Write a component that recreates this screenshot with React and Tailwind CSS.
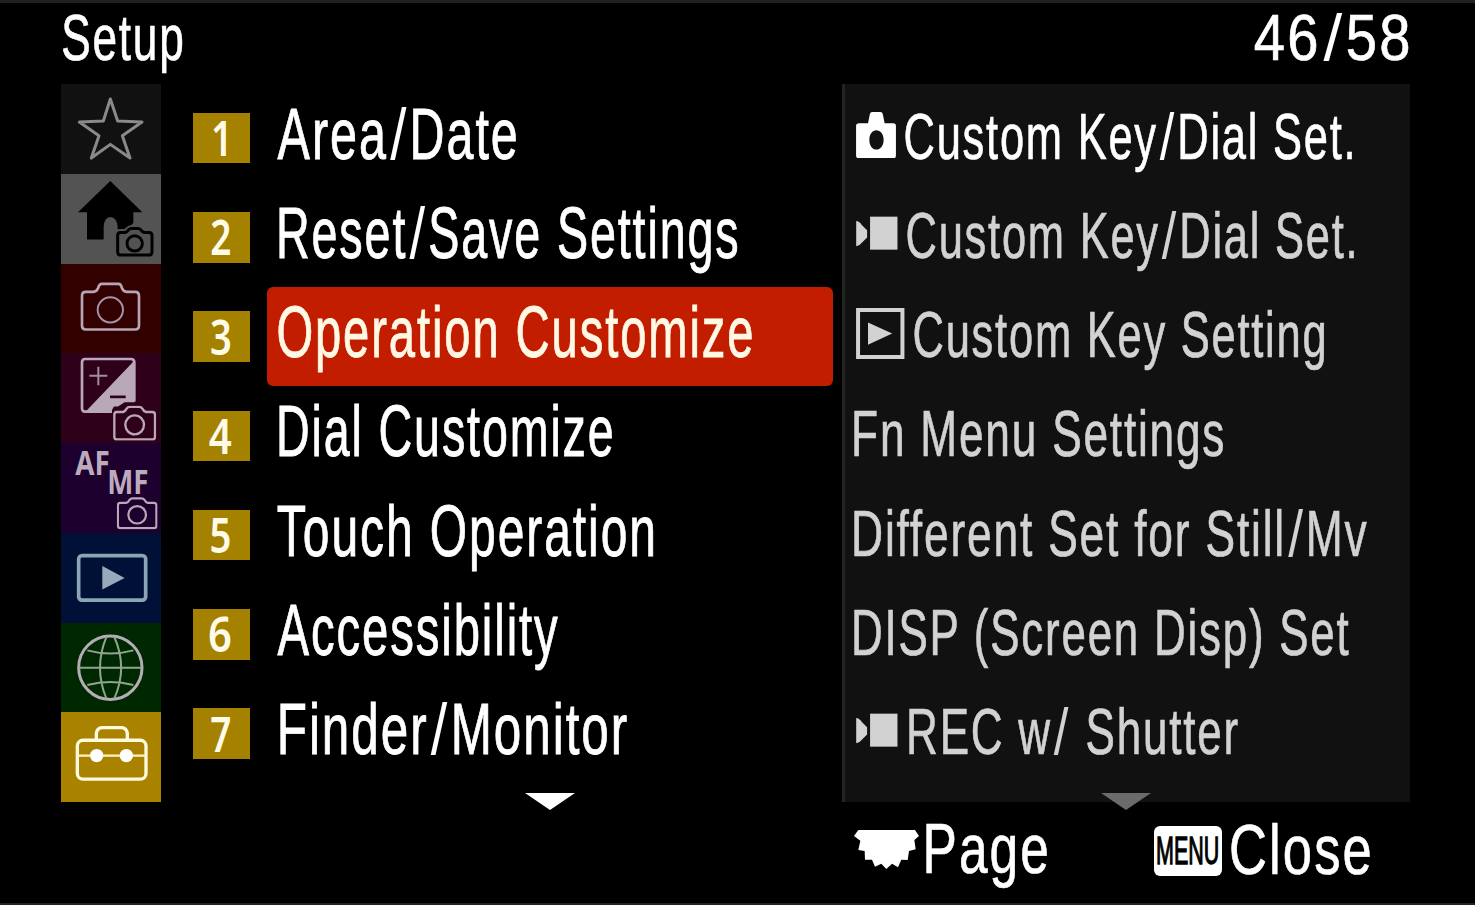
import { Fragment, useLayoutEffect, useRef } from 'react';

// Condensed lettering: the text is scaled horizontally so its ink spans exactly `w` pixels.
function Label({ text, w, className = '' }) {
  const ref = useRef(null);
  useLayoutEffect(() => {
    const el = ref.current;
    const cs = getComputedStyle(el);
    const ctx = document.createElement('canvas').getContext('2d');
    // Side bearings are measured at ten times the size, as glyph bounds are rounded to pixels.
    ctx.font = `${cs.fontWeight} ${parseFloat(cs.fontSize) * 10}px ${cs.fontFamily}`;
    const first = ctx.measureText(text[0]);
    const last = ctx.measureText(text[text.length - 1]);
    const left = -first.actualBoundingBoxLeft / 10;
    const right = (last.width - last.actualBoundingBoxRight) / 10;
    const spacing = parseFloat(cs.letterSpacing) || 0;
    const stroke = parseFloat(cs.webkitTextStrokeWidth) || 0;
    const ink = el.offsetWidth - spacing - left - right + stroke;
    const k = (w - 1) / ink;
    el.style.transform = `translateX(${0.3 + (stroke / 2 - left) * k}px) scaleX(${k})`;
  }, [text, w]);
  return (
    <span className={`block h-20 shrink-0 leading-[80px] whitespace-nowrap ${className}`} style={{ width: w }}>
      <span ref={ref} className="inline-block origin-left whitespace-pre">
        {text.split('/').map((part, i) => (
          <Fragment key={i}>
            {i > 0 && <span className="mr-[0.05em] ml-[0.08em] inline-block scale-x-120 [-webkit-text-stroke:0px]">/</span>}
            {part}
          </Fragment>
        ))}
      </span>
    </span>
  );
}

const sans = "font-['Liberation_Sans',Arial,sans-serif] tracking-[0.04em]";
const digit = "font-['Noto_Sans',sans-serif] font-semibold";

function MiniCamera({ x, y, w, h, className }) {
  return (
    <svg x={x} y={y} width={w} height={h} viewBox="0 0 130 104" preserveAspectRatio="none" className={className} fill="none" stroke="currentColor" strokeWidth="7">
      <path d="M11 19H30Q37 17 41 9Q44 4 51 4H78Q85 4 88 9Q92 17 99 19H118Q126 19 126 27V92Q126 100 118 100H12Q4 100 4 92V27Q4 19 11 19Z" />
      <circle cx="65" cy="57" r="28" />
    </svg>
  );
}

function Tile({ bg, box, children, overlay }) {
  return (
    <div className={`relative h-[89.75px] w-[100px] ${bg}`}>
      <svg viewBox={box} preserveAspectRatio="none" className="block h-full w-full" fill="none">{children}</svg>
      {overlay}
    </div>
  );
}

function Sidebar() {
  return (
    <nav className="ml-[61px] w-[100px] shrink-0">
      <Tile bg="bg-[#111111]" box="33 252 300 269">
        <path d="M181 297L203 363L276 366L217 407L240 474L181 433L124 474L147 407L88 366L160 363Z" stroke="#8a8a8a" strokeWidth="9" strokeLinejoin="round" />
      </Tile>
      <Tile bg="bg-[#535353]" box="33 521 300 269">
        <path d="M181 542L277 636H250V668L232 685L203 688V680Q200 650 181 650Q163 650 161 680V717H111V636H84Z" fill="#000" />
        <path d="M211 696H226Q232 694 236 688Q239 684 245 684H263Q269 684 272 688Q276 694 282 696H297Q306 696 306 705V755Q306 764 297 764H212Q203 764 203 755V705Q203 696 211 696Z" stroke="#535353" strokeWidth="20" />
        <g stroke="#000" strokeWidth="9">
          <path d="M211 696H226Q232 694 236 688Q239 684 245 684H263Q269 684 272 688Q276 694 282 696H297Q306 696 306 705V755Q306 764 297 764H212Q203 764 203 755V705Q203 696 211 696Z" fill="#535353" />
          <circle cx="254" cy="729" r="23" />
        </g>
      </Tile>
      <Tile bg="bg-[#330000]" box="33 11 300 270">
        <path d="M107 95H130Q140 94 144 84Q148 71 155 71H205Q213 71 216 84Q220 94 230 95H255Q267 95 267 107V197Q267 208 255 208H107Q96 208 96 197V107Q96 95 107 95Z" stroke="#b7a5b6" strokeWidth="8" />
        <circle cx="181" cy="149" r="38" stroke="#a493a6" strokeWidth="6" />
      </Tile>
      <Tile bg="bg-[#2f0019]" box="33 281 300 268">
        <path d="M254 303V428H224L204 441H192L182 458H105Z" fill="#b9a8b7" />
        <path d="M186 456H105Q96 456 96 446V309Q96 299 105 299H243Q253 299 253 309V426" stroke="#b9a8b7" strokeWidth="8" />
        <path d="M118 349H172M145 322V377" stroke="#a18c9f" strokeWidth="6" />
        <path d="M180 412H227" stroke="#2f0019" strokeWidth="8" />
        <MiniCamera x="189" y="438" w="130" h="105" className="text-[#b9a8b7]" />
      </Tile>
      <Tile
        bg="bg-[#1d002e]"
        box="33 549 300 269"
        overlay={
          <>
            <Label text="AF" w={34} className="absolute top-[-21px] left-[14px] font-['Noto_Sans',sans-serif] text-[34px] font-bold text-[#bcaabd]" />
            <Label text="MF" w={39} className="absolute top-[-2.5px] left-[47.5px] font-['Noto_Sans',sans-serif] text-[34px] font-bold text-[#bcaabd]" />
          </>
        }
      >
        <MiniCamera x="200" y="711" w="123" h="97" className="text-[#b9a8b7]" />
      </Tile>
      <Tile bg="bg-[#001036]" box="33 9 300 270">
        <rect x="86" y="77" width="201" height="134" rx="10" stroke="#8aa5b3" strokeWidth="11" />
        <path d="M157 108L224 144L157 179Z" fill="#98a9bb" />
      </Tile>
      <Tile bg="bg-[#002800]" box="33 279 300 269">
        <circle cx="181" cy="413" r="95" stroke="#b5adb5" strokeWidth="9" />
        <path d="M88 413H275M112 361Q181 380 250 361M112 465Q181 446 250 465M169 321Q131 413 169 505M193 321Q234 413 193 505" stroke="#8fa58f" strokeWidth="6" />
      </Tile>
      <Tile bg="bg-[#a98300]" box="33 548 300 270">
        <path d="M139 632V612Q141 596 157 595H214Q230 596 232 612V632" stroke="#fff9df" strokeWidth="10" />
        <rect x="82" y="633" width="206" height="117" rx="17" stroke="#fff9df" strokeWidth="10" />
        <path d="M84 679H286" stroke="#fff3c4" strokeWidth="7" />
        <circle cx="140" cy="679" r="20" fill="#fff" />
        <circle cx="229" cy="679" r="20" fill="#fff" />
      </Tile>
    </nav>
  );
}

const menu = [
  { n: '1', nw: 14, np: 'pr-[4px]', text: 'Area/Date', w: 239.5, pad: 'pl-[9.5px]' },
  { n: '2', nw: 20, np: 'pr-[2px]', text: 'Reset/Save Settings', w: 459, pad: 'pl-[11.5px]' },
  { n: '3', nw: 20, np: 'pr-[2px]', text: 'Operation Customize', w: 474.5, pad: 'pl-[10.5px]', active: true },
  { n: '4', nw: 23, np: 'pr-[2px]', text: 'Dial Customize', w: 334, pad: 'pl-[12px]' },
  { n: '5', nw: 19.5, np: 'pr-[1px]', text: 'Touch Operation', w: 377, pad: 'pl-[10px]' },
  { n: '6', nw: 22.5, np: 'pr-[2px]', text: 'Accessibility', w: 282, pad: 'pl-[10px]' },
  { n: '7', nw: 20, np: 'pr-[1px]', text: 'Finder/Monitor', w: 348, pad: 'pl-[12.5px]' },
];

function MovieIcon() {
  return (
    <svg viewBox="63 411 126 103" className="mb-[4px] h-[34px] w-[42px] shrink-0" fill="currentColor">
      <path d="M63 426Q73 427 80 438L96 454V476L80 492Q73 502 63 503Z" />
      <path d="M105 413H188V513H105Z" />
    </svg>
  );
}

function CameraIcon() {
  return (
    <svg viewBox="63 95 120 140" className="mb-[2px] h-[46.5px] w-[40px] shrink-0" fill="currentColor">
      <path fillRule="evenodd" d="M72 129H99L104 104Q105 95 112 95H136Q143 95 144 104L149 129H175Q183 129 183 137V226Q183 235 175 235H72Q63 235 63 226V137Q63 129 72 129ZM124 150C112 150 103 162 103 179S112 208 124 208S146 196 146 179S136 150 124 150Z" />
    </svg>
  );
}

function PlayIcon() {
  return (
    <svg viewBox="63 684 146 154" className="mb-[2px] h-[51px] w-[48.5px] shrink-0" fill="none">
      <path d="M69 690H203V832H69Z" stroke="currentColor" strokeWidth="12" />
      <path d="M99 728L172 761L99 795Z" fill="currentColor" />
    </svg>
  );
}

const settings = [
  { Icon: CameraIcon, gap: 'gap-[9px] pl-[11px]', text: 'Custom Key/Dial Set.', w: 447.5, color: 'text-white' },
  { Icon: MovieIcon, gap: 'gap-[9px] pl-[11px]', text: 'Custom Key/Dial Set.', w: 447.5 },
  { Icon: PlayIcon, gap: 'gap-[9px] pl-[11px]', text: 'Custom Key Setting', w: 411 },
  { gap: 'pl-[9px]', text: 'Fn Menu Settings', w: 370 },
  { gap: 'pl-[9px]', text: 'Different Set for Still/Mv', w: 514 },
  { gap: 'pl-[9px]', text: 'DISP (Screen Disp) Set', w: 496 },
  { Icon: MovieIcon, gap: 'gap-[10.5px] pl-[11px]', text: 'REC w/ Shutter', w: 330 },
];

function DownArrow({ className }) {
  return (
    <svg viewBox="0 0 50 17" className={`absolute h-[17px] w-[50px] ${className}`} fill="currentColor">
      <path d="M0 0H50L25 17Z" />
    </svg>
  );
}

export default function App() {
  return (
    <div className="flex h-[905px] w-[1475px] flex-col overflow-hidden border-t-[3px] border-b-2 border-[#212121] bg-black">
      <header className={`flex h-[81px] shrink-0 justify-between pr-[66px] pl-[62px] text-[65px] text-white [-webkit-text-stroke:0.7px] ${sans}`}>
        <Label text="Setup" w={121} className="mt-[-5px]" />
        <Label text="46/58" w={155} className="mt-[-5px]" />
      </header>

      <main className="flex h-[718px] shrink-0">
        <Sidebar />

        <section className="relative ml-8 w-[649px] shrink-0 pt-[4.5px]">
          {menu.map((m) => (
            <div key={m.n} className="flex h-[99.25px] items-center">
              <div className={`flex h-[50.5px] w-[57px] shrink-0 items-center justify-center bg-[#a58100] pb-[2px] text-[49px] text-[#fffbe8] ${m.np}`}>
                <Label text={m.n} w={m.nw} className={digit} />
              </div>
              <div className={`ml-[17px] flex h-full w-[566px] items-center rounded-md pb-[9px] text-[73px] [-webkit-text-stroke:0.9px] ${sans} ${m.pad} ${m.active ? 'bg-[#c31d00] text-[#fff8e4]' : 'text-white'}`}>
                <Label text={m.text} w={m.w} />
              </div>
            </div>
          ))}
          <DownArrow className="top-[709px] left-[332px] text-white" />
        </section>

        <section className="relative w-[568px] shrink-0 border-l-[3px] border-[#232323] bg-[#111111] pt-[2.5px]">
          {settings.map((s, i) => (
            <div key={i} className={`flex h-[99.25px] items-center text-[65px] [-webkit-text-stroke:0.7px] ${sans} ${s.gap} ${s.color || 'text-[#d2d2d2]'}`}>
              {s.Icon && <s.Icon />}
              <Label text={s.text} w={s.w} className="mt-px" />
            </div>
          ))}
          <DownArrow className="top-[709px] left-[256px] text-[#6b6b6b]" />
        </section>
      </main>

      <footer className={`flex h-[92px] items-center pl-[854px] text-[70px] text-white [-webkit-text-stroke:0.7px] ${sans}`}>
        <svg viewBox="57 418 195 117" className="mt-[2px] h-[39px] w-[65px] shrink-0" fill="currentColor">
          <path d="M70 418H240L252 436L238 448L242 476L222 481L218 508L199 507L189 530L171 519L154 535L139 519L120 528L111 507H90L89 481L70 478L76 450L57 436Z" />
        </svg>
        <Label text="Page" w={122} className="mt-px ml-[6.5px]" />
        <div className="mt-[6px] ml-[106px] flex h-[50px] w-[68.5px] shrink-0 items-center justify-center rounded-md bg-white text-[39px] tracking-normal text-black [-webkit-text-stroke:1.3px]">
          <Label text="MENU" w={62} />
        </div>
        <Label text="Close" w={139.5} className="mt-[3px] ml-[9px]" />
      </footer>
    </div>
  );
}
